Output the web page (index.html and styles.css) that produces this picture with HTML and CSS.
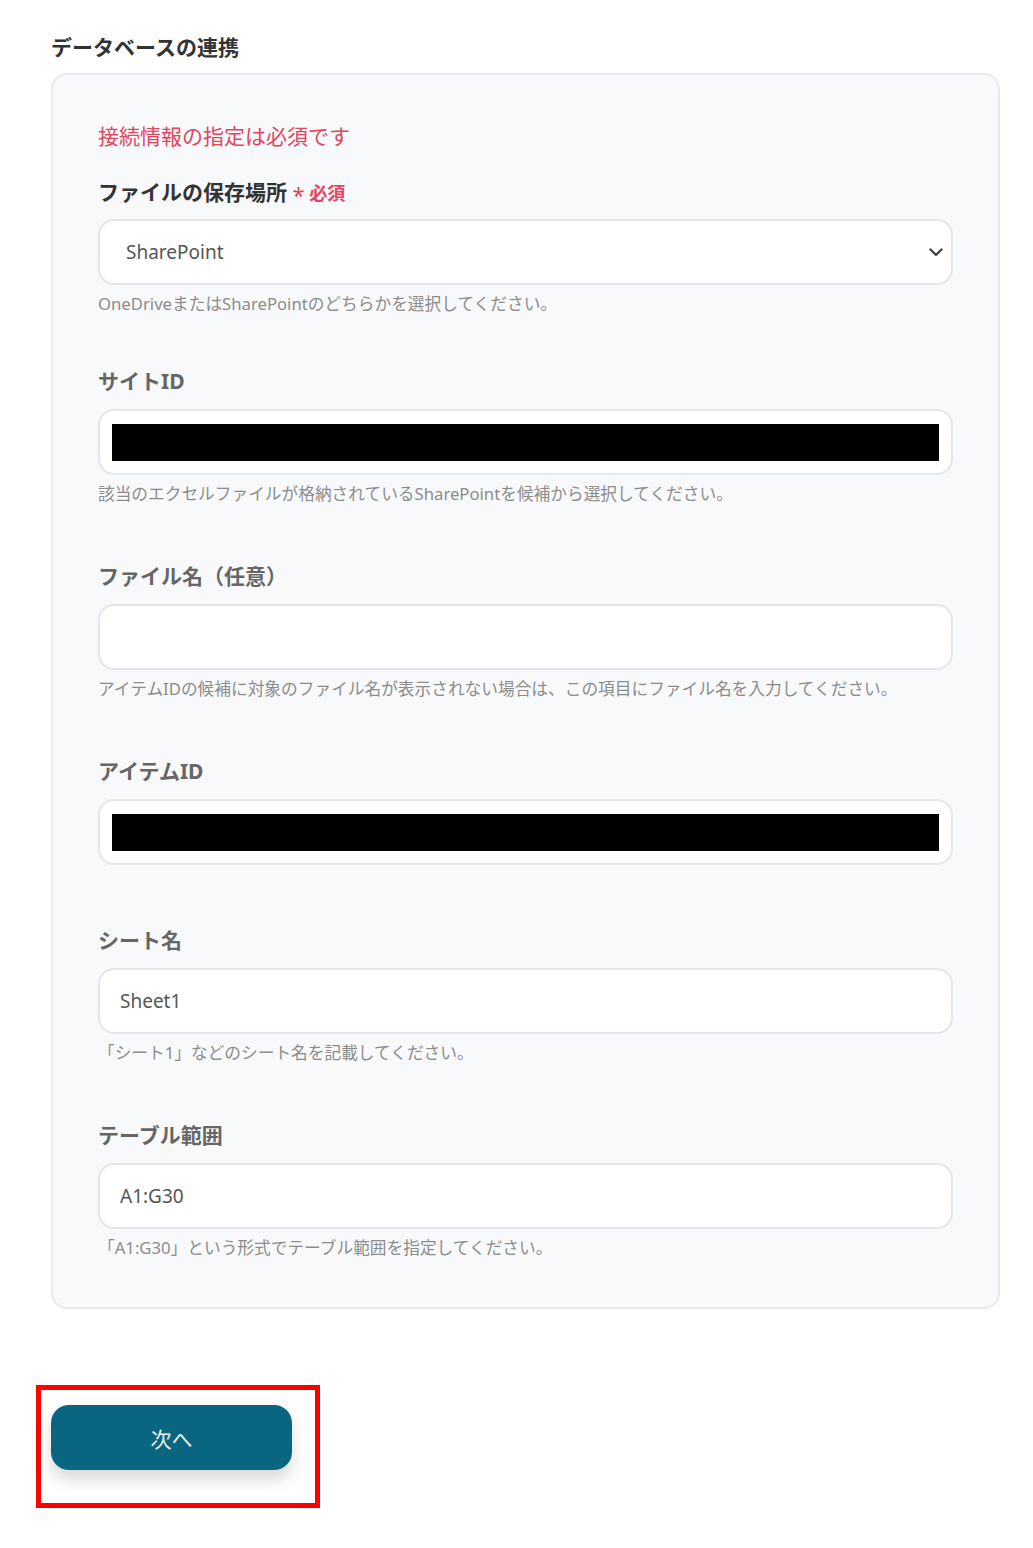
FILE: index.html
```html
<!DOCTYPE html>
<html lang="ja">
<head>
    <meta charset="UTF-8">
    <meta name="viewport" content="width=device-width, initial-scale=1.0">
    <title>データベースの連携</title>
    <link rel="stylesheet" href="styles.css">
</head>
<body>

    <h2 class="section-title">データベースの連携</h2>

    <div class="card">
        <p class="error-text">接続情報の指定は必須です</p>

        <div class="field first">
            <label class="field-label primary" for="location">ファイルの保存場所 <span class="required"><span class="star">*</span> 必須</span></label>
            <div class="select-wrap">
                <select id="location" class="field-input">
                    <option>SharePoint</option>
                    <option>OneDrive</option>
                </select>
                <svg class="chevron" width="14" height="9" viewBox="0 0 14 9">
                    <path d="M1.5 1.5 L7 7 L12.5 1.5" fill="none" stroke="#444" stroke-width="2.4" stroke-linecap="round" stroke-linejoin="round"/>
                </svg>
            </div>
            <p class="help">OneDriveまたはSharePointのどちらかを選択してください。</p>
        </div>

        <div class="field">
            <label class="field-label" for="site_id">サイトID</label>
            <div class="field-input masked" id="site_id"><span class="redact"></span></div>
            <p class="help">該当のエクセルファイルが格納されているSharePointを候補から選択してください。</p>
        </div>

        <div class="field">
            <label class="field-label" for="file_name">ファイル名（任意）</label>
            <input type="text" id="file_name" class="field-input">
            <p class="help">アイテムIDの候補に対象のファイル名が表示されない場合は、この項目にファイル名を入力してください。</p>
        </div>

        <div class="field no-help">
            <label class="field-label" for="item_id">アイテムID</label>
            <div class="field-input masked" id="item_id"><span class="redact"></span></div>
        </div>

        <div class="field">
            <label class="field-label" for="sheet_name">シート名</label>
            <input type="text" id="sheet_name" class="field-input" value="Sheet1">
            <p class="help">「シート1」などのシート名を記載してください。</p>
        </div>

        <div class="field">
            <label class="field-label" for="table_range">テーブル範囲</label>
            <input type="text" id="table_range" class="field-input" value="A1:G30">
            <p class="help">「A1:G30」という形式でテーブル範囲を指定してください。</p>
        </div>
    </div>

    <div class="actions">
        <div class="highlight">
            <button type="button" class="next-button">次へ</button>
        </div>
    </div>

</body>
</html>
```

FILE: styles.css
```css
body {
    font-family: "Noto Sans", "Noto Sans CJK JP", sans-serif;
    background-color: #fff;
    margin: 0;
    padding: 33px 33px 40px 51px;
    color: #333;
}

.section-title {
    font-size: 21px;
    font-weight: 700;
    line-height: 28px;
    margin: 0 0 12px 0;
    color: #333;
}

.card {
    background-color: #f8f9fa;
    border: 2px solid #e8eaed;
    border-radius: 16px;
    padding: 47px 45px 48px 45px;
    width: 949px;
    box-sizing: border-box;
}

.error-text {
    color: #e2455f;
    font-size: 21px;
    line-height: 28px;
    margin: 0 0 30px 0;
}

.field {
    margin-bottom: 59px;
}

.field.first {
    margin-bottom: 54px;
}

.field:last-child {
    margin-bottom: 0;
}

.field.no-help {
    margin-bottom: 63px;
}

.field-label {
    display: block;
    font-size: 21px;
    font-weight: 700;
    line-height: 24px;
    color: #666;
    margin-bottom: 16px;
}

.field-label.primary {
    color: #333;
    margin-bottom: 13px;
}

.required {
    color: #e2455f;
    font-size: 18px;
    font-weight: 700;
}

.star {
    font-size: 22px;
    font-weight: 400;
    vertical-align: -3px;
}

.field-input {
    display: block;
    width: 100%;
    height: 66px;
    box-sizing: border-box;
    background-color: #fff;
    border: 2px solid #e3e6ea;
    border-radius: 16px;
    padding: 0 20px;
    font-family: inherit;
    font-size: 19px;
    color: #555;
    outline: none;
}

.select-wrap {
    position: relative;
}

select.field-input {
    appearance: none;
    -webkit-appearance: none;
    padding-left: 26px;
}

.chevron {
    position: absolute;
    right: 10px;
    top: 29px;
}

.masked {
    display: flex;
    align-items: center;
    padding: 0 12px;
}

.redact {
    display: block;
    width: 100%;
    height: 37px;
    background-color: #000;
}

.help {
    font-size: 16.7px;
    line-height: 22px;
    color: #8c8c8c;
    margin: 8px 0 0 0;
}

.actions {
    margin-top: 76px;
    margin-left: -15px;
}

.highlight {
    display: inline-block;
    border: 5px solid #f00;
    padding: 15px 23px 33px 10px;
}

.next-button {
    display: block;
    width: 241px;
    height: 65px;
    background-color: #0a6680;
    color: #e8f2f5;
    font-family: inherit;
    font-size: 21px;
    border: none;
    border-radius: 18px;
    cursor: pointer;
    box-shadow: 0 10px 16px rgba(0, 0, 0, 0.15);
}

.next-button:hover {
    background-color: #085a71;
}
```
